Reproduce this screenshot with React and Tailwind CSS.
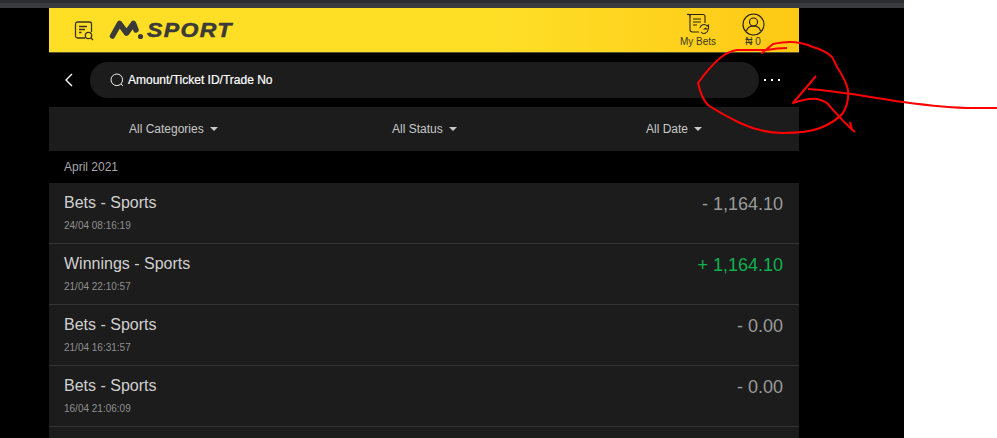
const font = { fontFamily: '"Liberation Sans", Arial, sans-serif' };

function Row({ title, date, amount, green }) {
  return (
    <div className="h-[61px] flex justify-between border-b border-[#333333] pl-[15px] pr-[16px] pt-[10px]">
      <div>
        <div className="text-[16px] leading-[20px] text-[#d0d0d0]">{title}</div>
        <div className="text-[10px] leading-[12px] mt-[7px] text-[#8f8f8f]">{date}</div>
      </div>
      <div className={`text-[18px] leading-[22px] ${green ? "text-[#0fb04f]" : "text-[#9a9a9a]"}`}>{amount}</div>
    </div>
  );
}

function Filter({ label, className }) {
  return (
    <div className={`flex items-center text-[12px] text-[#c8c8c8] ${className}`}>
      {label}
      <span className="ml-[6px] w-0 h-0 border-x-[4px] border-x-transparent border-t-[4px] border-t-[#c8c8c8]" />
    </div>
  );
}

export default function App() {
  return (
    <div className="relative w-[997px] h-[438px] overflow-hidden bg-white" style={font}>
      <div className="w-[904px] h-[438px] flex flex-col bg-black overflow-hidden">
        <div className="h-[3px] bg-[#2b2c2f] shrink-0" />
        <div className="h-[5px] bg-[#3a3b3e] shrink-0" />
        <div className="ml-[49px] w-[750px]">
          <div className="h-[45px] box-border flex items-center justify-between bg-gradient-to-r from-[#ffde26] from-60% to-[#fdc915] border-b border-[#5a5130]">
            <div className="flex items-center">
              <svg className="ml-[25px]" width="20" height="21" viewBox="0 0 20 21" fill="none" stroke="#3a3420" strokeWidth="1.3">
                <path d="M11 18H3.5a2 2 0 0 1-2-2V4a2 2 0 0 1 2-2h12a2 2 0 0 1 2 2v8" />
                <path d="M5 6.5h8M5 9.5h6M5 12.5h2.5" />
                <circle cx="14.5" cy="15.5" r="3.2" />
                <path d="M17 18l2 2" />
              </svg>
              <svg className="ml-[15px]" width="36" height="22" viewBox="0 0 36 22" fill="none" stroke="#3a3a38" strokeLinecap="round" strokeLinejoin="round">
                <path d="M3.5 17 L10.5 4.5 L17.5 14 L24.5 4.5 L27 11" strokeWidth="5.5" />
                <circle cx="31.5" cy="17.5" r="2.6" fill="#3a3a38" stroke="none" />
              </svg>
              <span className="ml-[2px] origin-left scale-x-[1.15] text-[20px] leading-none font-bold italic tracking-[1.2px] text-[#3a3a38] [-webkit-text-stroke:0.5px_#3a3a38]">SPORT</span>
            </div>
            <div className="flex items-center">
              <div className="flex flex-col items-center w-[60px] mr-[5px]">
                <svg width="24" height="21" viewBox="0 0 24 21" fill="none" stroke="#2a2614" strokeWidth="1.1">
                  <path d="M1 1.5h16a2 2 0 0 1 2 2V10M4 1.5v15a2.5 2.5 0 0 0 2.5 2.5H13" />
                  <path d="M1 1.5a2 2 0 0 1 3 2" />
                  <path d="M7 6h8M7 9h8M7 12h4" />
                  <path d="M14 15a4 4 0 0 1 7-2l1.5-1v4h-4l1.4-1.2M22 17a4 4 0 0 1-7 2" />
                </svg>
                <span className="text-[10px] leading-[11px] mt-[2px] text-[#3c3a22]">My Bets</span>
              </div>
              <div className="flex flex-col items-center w-[40px] mr-[26px]">
                <svg width="23" height="23" viewBox="0 0 23 23" fill="none" stroke="#1d1a0c" strokeWidth="1.1">
                  <circle cx="11.5" cy="11.5" r="10.5" />
                  <circle cx="11.5" cy="9" r="4" />
                  <path d="M4.5 18c1-4 4-5 7-5s6 1 7 5" />
                </svg>
                <span className="text-[10px] leading-[11px] text-[#3c3a22]">₦ 0</span>
              </div>
            </div>
          </div>

          <div className="h-[54px] flex items-center">
            <svg className="ml-[15px]" width="10" height="14" viewBox="0 0 10 14" fill="none" stroke="#ffffff" strokeWidth="1.4">
              <path d="M8 1L2 7l6 6" />
            </svg>
            <div className="ml-[16px] w-[669px] h-[36px] rounded-[18px] bg-[#1c1c1c] flex items-center pl-[20px]">
              <svg width="14" height="14" viewBox="0 0 14 14" fill="none" stroke="#f0f0f0" strokeWidth="1">
                <circle cx="6.8" cy="6.8" r="5.8" />
                <path d="M11 11l2 2" />
              </svg>
              <span className="ml-[4px] text-[12px] text-white [-webkit-text-stroke:0.2px_#ffffff]">Amount/Ticket ID/Trade No</span>
            </div>
            <div className="ml-[5px] flex gap-[5px]">
              <span className="w-[2px] h-[2px] bg-white" />
              <span className="w-[2px] h-[2px] bg-white" />
              <span className="w-[2px] h-[2px] bg-white" />
            </div>
          </div>

          <div className="h-[44px] bg-[#1c1c1c] flex items-center">
            <Filter label="All Categories" className="ml-[80px] w-[263px]" />
            <Filter label="All Status" className="w-[254px]" />
            <Filter label="All Date" />
          </div>

          <div className="h-[32px] flex items-center pl-[15px] text-[12px] text-[#a8a8a8]">April 2021</div>

          <div className="bg-[#1c1c1c]">
            <Row title="Bets - Sports" date="24/04 08:16:19" amount="- 1,164.10" />
            <Row title="Winnings - Sports" date="21/04 22:10:57" amount="+ 1,164.10" green />
            <Row title="Bets - Sports" date="21/04 16:31:57" amount="- 0.00" />
            <Row title="Bets - Sports" date="16/04 21:06:09" amount="- 0.00" />
            <div className="h-[61px]" />
          </div>
        </div>
      </div>

      <svg className="absolute left-0 top-0 pointer-events-none" width="997" height="438" viewBox="0 0 997 438" fill="none" stroke="#ff0000" strokeWidth="2" strokeLinejoin="round">
        <path d="M787 48 C780 48 772 49 767 50 L737 50 C731 51 725 54 720 58 C712 65 703 76 698 83 C700 92 703 100 708 105 C718 112 730 118 740 123 C755 130 770 133 783 133 C797 133 810 132 820 128 C830 124 838 119 843 113 C847 106 849 98 848 90 C846 81 841 73 837 67 C835 63 834 60 832 57 C827 52 820 49 813 47 C806 44 798 42 790 42 C784 42 778 43 773 44 L762 53 L765 50" />
        <path d="M816 76 L793 103 C802 100 811 98 817 99 C821 100 824 101 827 103 C835 112 845 124 855 132" />
        <path d="M850 122 L852 130" />
        <path d="M808 89 C840 91 875 98 903 102 C925 105 950 108 973 108 L997 108" />
      </svg>
    </div>
  );
}
